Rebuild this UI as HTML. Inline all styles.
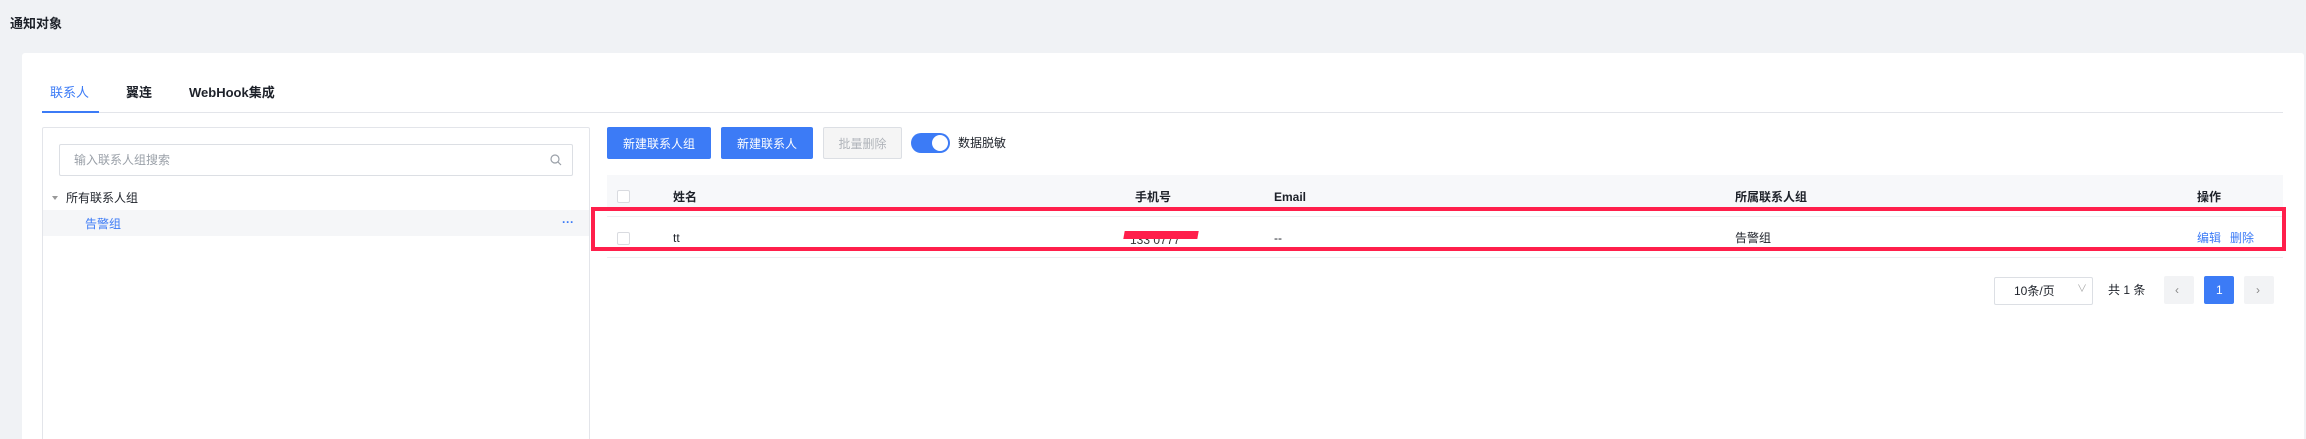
<!DOCTYPE html>
<html style="height:439px;overflow:hidden"><head><meta charset="utf-8"><style>
*{margin:0;padding:0;box-sizing:border-box}
html{width:2306px;height:439px;overflow:hidden}
body{width:2306px;height:439px;background:#f0f2f5;position:relative;overflow:hidden;font-family:"Liberation Sans","Noto Sans CJK SC",sans-serif;font-size:12px;color:#1d2129}
.a{position:absolute;white-space:nowrap}
.t{line-height:14px;transform:translateY(-7px)}
.btn{position:absolute;top:127px;height:32px;border-radius:2px;color:#fff;background:#3c7bf6;display:flex;align-items:center;justify-content:center;font-size:12px}
.cb{position:absolute;width:13px;height:13px;border:1px solid #d9dbe0;border-radius:2px;background:#fff}
.blue{color:#3c7bf6}
</style></head><body>
<div class="a t" style="left:10px;top:24px;font-size:13px;font-weight:bold">通知对象</div>
<div class="a" style="left:22px;top:53px;width:2282px;height:386px;background:#fff;border-radius:3px 3px 0 0"></div>
<div class="a t blue" style="left:50px;top:93px;font-size:13px">联系人</div>
<div class="a t" style="left:126px;top:93px;font-size:13px;font-weight:bold">翼连</div>
<div class="a t" style="left:189px;top:93px;font-size:13px;font-weight:bold">WebHook集成</div>
<div class="a" style="left:42px;top:112px;width:2241px;height:1px;background:#e3e5ea"></div>
<div class="a" style="left:42px;top:111px;width:57px;height:2px;background:#3c7bf6"></div>
<div class="a" style="left:42px;top:127px;width:548px;height:330px;border:1px solid #e3e5ea;border-radius:2px"></div>
<div class="a" style="left:59px;top:144px;width:514px;height:32px;border:1px solid #dcdfe4;border-radius:2px"></div>
<div class="a t" style="left:74px;top:160px;color:#9aa0a8">输入联系人组搜索</div>
<svg class="a" style="left:550px;top:154px" width="12" height="12" viewBox="0 0 12 12"><circle cx="5" cy="5" r="4" fill="none" stroke="#9aa0a8" stroke-width="1.2"/><path d="M8 8l3 3" stroke="#9aa0a8" stroke-width="1.2"/></svg>
<div class="a" style="left:52px;top:196px;width:0;height:0;border-left:3px solid transparent;border-right:3px solid transparent;border-top:4px solid #999"></div>
<div class="a t" style="left:66px;top:198px">所有联系人组</div>
<div class="a" style="left:43px;top:210px;width:546px;height:26px;background:#f5f6f8"></div>
<div class="a t blue" style="left:85px;top:224px">告警组</div>
<div class="a t blue" style="left:562px;top:222px;font-size:12px;font-weight:bold">···</div>
<div class="btn" style="left:607px;width:104px">新建联系人组</div>
<div class="btn" style="left:721px;width:92px">新建联系人</div>
<div class="btn" style="left:823px;width:79px;background:#f5f5f5;border:1px solid #dcdfe4;color:#b0b4ba">批量删除</div>
<div class="a" style="left:911px;top:133px;width:39px;height:20px;border-radius:10px;background:#3c7bf6"></div>
<div class="a" style="left:932px;top:135px;width:16px;height:16px;border-radius:8px;background:#fff"></div>
<div class="a t" style="left:958px;top:143px">数据脱敏</div>
<div class="a" style="left:607px;top:175px;width:1676px;height:32px;background:#f7f8fa"></div>
<div class="cb" style="left:617px;top:190px"></div>
<div class="a t" style="left:673px;top:197px;font-weight:bold">姓名</div>
<div class="a t" style="left:1135px;top:197px;font-weight:bold">手机号</div>
<div class="a t" style="left:1274px;top:197px;font-weight:bold">Email</div>
<div class="a t" style="left:1735px;top:197px;font-weight:bold">所属联系人组</div>
<div class="a t" style="left:2197px;top:197px;font-weight:bold">操作</div>
<div class="a" style="left:607px;top:216px;width:1676px;height:1px;background:#eceef2"></div>
<div class="cb" style="left:617px;top:232px"></div>
<div class="a t" style="left:673px;top:238px">tt</div>
<div class="a t" style="left:1130px;top:240px;color:#333">133 0777</div>
<div class="a" style="left:1124px;top:231px;width:74px;height:8px;background:#ff1f4b;transform:skewX(-10deg)"></div>
<div class="a t" style="left:1274px;top:238px">--</div>
<div class="a t" style="left:1735px;top:238px">告警组</div>
<div class="a t blue" style="left:2197px;top:238px">编辑</div>
<div class="a t blue" style="left:2230px;top:238px">删除</div>
<div class="a" style="left:607px;top:257px;width:1676px;height:1px;background:#eceef2"></div>
<div class="a" style="left:591px;top:207px;width:1695px;height:44px;border:4px solid #ff1f4b"></div>
<div class="a" style="left:1994px;top:277px;width:99px;height:28px;border:1px solid #dcdfe4;border-radius:2px"></div>
<div class="a t" style="left:2014px;top:291px">10条/页</div>
<div class="a t" style="left:2077px;top:290px;color:#aaa;font-size:10px">∨</div>
<div class="a t" style="left:2108px;top:290px">共 1 条</div>
<div class="a" style="left:2164px;top:276px;width:30px;height:28px;background:#f2f3f5;border-radius:2px"></div>
<div class="a t" style="left:2175px;top:290px;color:#888">‹</div>
<div class="a" style="left:2204px;top:276px;width:30px;height:28px;background:#3c7bf6;border-radius:2px"></div>
<div class="a t" style="left:2216px;top:290px;color:#fff">1</div>
<div class="a" style="left:2244px;top:276px;width:30px;height:28px;background:#f2f3f5;border-radius:2px"></div>
<div class="a t" style="left:2256px;top:290px;color:#888">›</div>
</body></html>
